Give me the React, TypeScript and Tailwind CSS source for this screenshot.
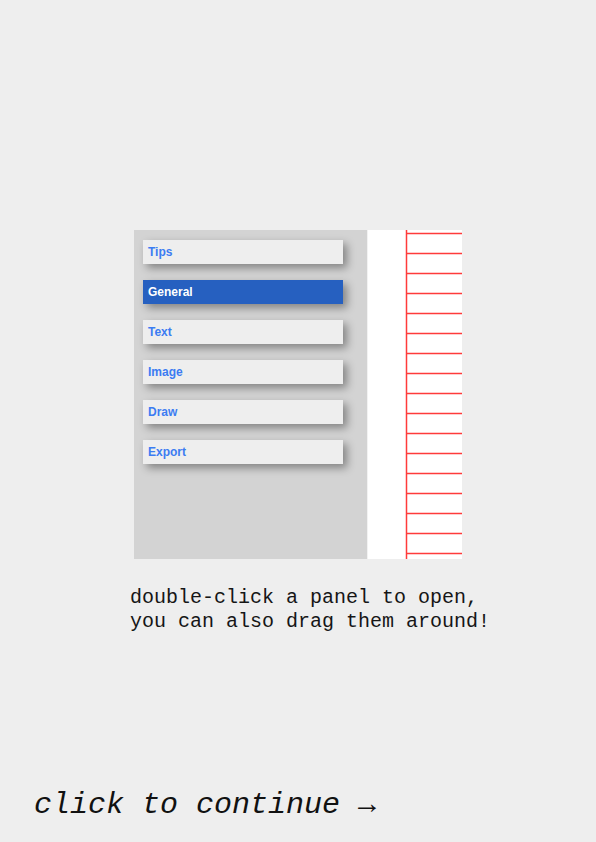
import React from "react";

const items = ["Tips", "General", "Text", "Image", "Draw", "Export"];

export default function App() {
  return (
    <div className="w-[596px] h-[842px] bg-[#eeeeee] overflow-hidden flex flex-col">
      <div className="mt-[230px] ml-[134px] flex h-[329px]">
        <div className="w-[233px] h-full bg-[#d3d3d3] pt-[10px] pl-[9px] flex flex-col gap-[16px]">
          {items.map((it) => {
            const active = it === "General";
            return (
              <div
                key={it}
                className={
                  active
                    ? "w-[200px] h-[24px] bg-[#2660c0] text-white flex items-center pl-[5px] text-[12px] font-bold shadow-[4px_4px_8px_rgba(0,0,0,0.38)]"
                    : "w-[200px] h-[24px] bg-[#eeeeee] text-[#3c7cf2] flex items-center pl-[5px] text-[12px] font-bold shadow-[4px_4px_8px_rgba(0,0,0,0.38)]"
                }
                style={{ fontFamily: '"Liberation Sans", Arial, sans-serif' }}
              >
                {it}
              </div>
            );
          })}
        </div>
        <div className="w-[1px] h-full bg-[#f2f2f2]" />
        <div className="w-[94px] h-full bg-white">
          <svg width="94" height="329" viewBox="0 0 94 329">
            <line x1="38.5" y1="0" x2="38.5" y2="329" stroke="#ff3b3b" strokeWidth="1.5" />
            {Array.from({ length: 17 }).map((_, i) => (
              <line
                key={i}
                x1="38"
                y1={3.5 + 20 * i}
                x2="94"
                y2={3.5 + 20 * i}
                stroke="#ff3b3b"
                strokeWidth="1.5"
              />
            ))}
          </svg>
        </div>
      </div>
      <div
        className="mt-[27px] ml-[130px] text-[20px] leading-[24px] text-[#161616] whitespace-pre"
        style={{ fontFamily: '"Liberation Mono", "DejaVu Sans Mono", monospace' }}
      >
        {"double-click a panel to open,\nyou can also drag them around!"}
      </div>
      <div
        className="mt-[153px] ml-[34px] text-[30px] leading-[36px] italic text-[#111111] whitespace-pre"
        style={{ fontFamily: '"Liberation Mono", "DejaVu Sans Mono", monospace' }}
      >
        {"click to continue →"}
      </div>
    </div>
  );
}
